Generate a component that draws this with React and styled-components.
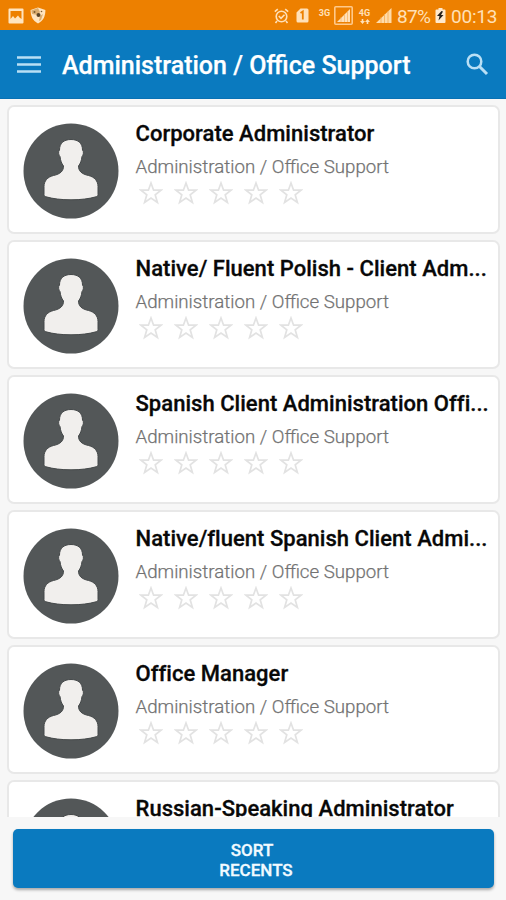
import React from "react";
import styled, { createGlobalStyle } from "styled-components";

const GlobalStyle = createGlobalStyle`
  * { box-sizing: border-box; }
  body { margin: 0; background: #f7f7f7; font-family: Roboto, "Liberation Sans", sans-serif; }
`;

const Screen = styled.div`
  width: 506px;
  height: 900px;
  display: flex;
  flex-direction: column;
  overflow: hidden;
  background: #f7f7f7;
`;

const StatusBar = styled.div`
  flex: none;
  height: 30px;
  padding: 1px 9px 0 8px;
  display: flex;
  align-items: center;
  background: #ed8000;
  color: #ffe0b8;
  svg { display: block; flex: none; }
`;

const StatusGroup = styled.div`
  display: flex;
  align-items: center;
  margin-left: ${(p) => (p.$end ? "auto" : "0")};
`;

const Slot = styled.span`
  display: flex;
  margin-left: ${(p) => p.$gap || 0}px;
`;

const StatusText = styled.span`
  width: ${(p) => p.$width}px;
  margin-left: ${(p) => p.$gap}px;
  font-size: 19px;
  line-height: 28px;
  letter-spacing: ${(p) => p.$spacing || 0}px;
  padding-top: 2px;
  white-space: nowrap;
`;

const NetworkLabel = styled.span`
  width: 13px;
  margin-left: ${(p) => p.$gap}px;
  display: flex;
  flex-direction: column;
  align-items: center;
  align-self: flex-start;
  padding-top: 8px;
  font-size: 9px;
  font-weight: 700;
  line-height: 9px;
`;

const AppBar = styled.header`
  flex: none;
  height: 69px;
  padding: 2px 17px 0 17px;
  display: flex;
  align-items: center;
  background: #0a7abf;
  border-bottom: 1px solid #0871b4;
  color: #b9dff5;
`;

const IconButton = styled.button`
  border: 0;
  padding: 0;
  background: none;
  color: inherit;
  display: flex;
`;

const Title = styled.h1`
  flex: 1;
  margin: 2px 0 0 21px;
  color: #fff;
  font-size: 25px;
  font-weight: 500;
  -webkit-text-stroke: 0.25px #fff;
  line-height: 32px;
  white-space: nowrap;
`;

const List = styled.main`
  flex: none;
  height: 718px;
  padding: 6px 6px 0 7px;
  display: flex;
  flex-direction: column;
  gap: 6px;
  overflow: hidden;
`;

const Card = styled.article`
  flex: none;
  height: 129px;
  padding: 0 9px 0 14px;
  display: flex;
  background: #fff;
  border: 2px solid #e8e8e8;
  border-radius: 7px;
`;

const Avatar = styled.svg`
  flex: none;
  display: block;
  width: 96px;
  height: 96px;
  margin-top: 15.5px;
`;

const Details = styled.div`
  flex: 1;
  min-width: 0;
  margin-left: 16.5px;
  padding-top: 13px;
`;

const JobTitle = styled.h2`
  margin: 0;
  color: #080808;
  font-size: 22px;
  font-weight: 500;
  -webkit-text-stroke: 0.3px #080808;
  letter-spacing: 0.03px;
  line-height: 28px;
  white-space: nowrap;
`;

const Category = styled.p`
  margin: 7px 0 0;
  color: #727272;
  font-size: 18.7px;
  font-weight: 300;
  -webkit-text-stroke: 0.25px #727272;
  line-height: 24px;
  white-space: nowrap;
`;

const Rating = styled.div`
  display: flex;
  gap: 11.2px;
  margin: 2px 0 0 3px;
`;

const Footer = styled.footer`
  padding: 12px 12px 0 13px;
`;

const SortButton = styled.button`
  width: 100%;
  height: 59px;
  border: 0;
  border-radius: 5px;
  padding: 3px 0 0 5px;
  display: flex;
  flex-direction: column;
  align-items: center;
  justify-content: center;
  background: #0a7abf;
  box-shadow: 0 2px 3px rgba(0, 0, 0, 0.32);
  color: #f2faff;
  font: 500 17px/20px Roboto, "Liberation Sans", sans-serif;
  -webkit-text-stroke: 0.3px #f2faff;
`;

const ButtonLine = styled.span`
  display: block;
  padding-right: ${(p) => p.$trail || 0}px;
`;

const PictureIcon = () => (
  <svg width="16" height="16" viewBox="0 0 16 16">
    <path fill="#ffe4bf" fillRule="evenodd" d="M1.5.5h13a1 1 0 0 1 1 1v13a1 1 0 0 1-1 1h-13a1 1 0 0 1-1-1v-13a1 1 0 0 1 1-1ZM2.500 3v8l2.500-3 2 2.500L10 7.500l1.500 2 2 1.500V3Z" />
  </svg>
);

const ShieldIcon = () => (
  <svg width="16" height="17" viewBox="0 0 16 17">
    <path fill="#ffe4bf" d="M8 .5 15.4 3c0 6-1.8 10.500-7.400 13.500C2.500 13.500.6 9 .6 3Z" />
    <path fill="#dcae70" d="m8 1 2 4-2 3-6-1-.7-3.500ZM10 9l3-2-2 6-2 1Z" />
    <circle cx="8.500" cy="8" r="2" fill="#594326" />
    <circle cx="4.500" cy="5" r="1" fill="#7b5b30" />
    <circle cx="11.500" cy="4.500" r=".8" fill="#7b5b30" />
  </svg>
);

const AlarmIcon = () => (
  <svg width="15" height="16" viewBox="0 0 15 16" fill="none" stroke="currentColor" strokeWidth="1.6">
    <circle cx="7.500" cy="8.500" r="5.300" />
    <path d="m.8 3.700 3-2.500m10.400 2.500-3-2.500M3 13l-1.500 2M12 13l1.500 2M4.800 8l2.200 2.300 3.500-3.600" />
  </svg>
);

const SimIcon = () => (
  <svg width="13" height="15" viewBox="0 0 13 15">
    <path fill="currentColor" d="M4.500.5H11A1.500 1.500 0 0 1 12.500 2v11a1.500 1.500 0 0 1-1.500 1.500H2A1.500 1.500 0 0 1 .5 13V4.500Z" />
    <path d="m4.500 5 2.300-1.500V11.500" fill="none" stroke="#ed8000" strokeWidth="1.800" />
  </svg>
);

const SignalIcon = ({ boxed }) => boxed ? (
  <svg width="19" height="19" viewBox="0 0 19 19">
    <rect x=".8" y=".8" width="17.400" height="17.400" rx="1" fill="none" stroke="#ffc98a" strokeWidth="1.600" />
    <path fill="#ffe0b8" d="M16 3v13H3Z" />
    <path d="M7 11v5M10.500 8v8M13.500 5v11" stroke="#f7b15f" strokeWidth=".7" />
  </svg>
) : (
  <svg width="16" height="15" viewBox="0 0 16 15">
    <path fill="#ffdba9" d="M15.500 0v15H0Z" />
    <path d="M5 9v6M8.500 6v9M12 3v12" stroke="#f5aa52" strokeWidth=".8" />
  </svg>
);

const DataArrows = () => (
  <svg width="10" height="7" viewBox="0 0 10 7">
    <path fill="currentColor" d="M2.500 6 0 3h1.700V1h1.600v2H5ZM7.500 1 5 4h1.700v2h1.600V4H10Z" />
  </svg>
);

const BatteryIcon = () => (
  <svg width="11" height="15" viewBox="0 0 11 15">
    <path fill="#ffe9cc" d="M3.500 0h4v1.500h2a1 1 0 0 1 1 1V14a1 1 0 0 1-1 1h-8a1 1 0 0 1-1-1V2.500a1 1 0 0 1 1-1h2Z" />
    <path fill="#26211c" d="M6.500 3 2 8h2.500L3.500 12.500 8.500 7H6l2-3.500Z" />
  </svg>
);

const MenuIcon = () => (
  <svg width="24" height="18" viewBox="0 0 24 18" fill="none" stroke="currentColor" strokeWidth="2.300">
    <path d="M0 1.500h24M0 8.500h24M0 15.500h24" />
  </svg>
);

const SearchIcon = () => (
  <svg width="24" height="24" viewBox="0 0 24 24" fill="none" stroke="currentColor" strokeWidth="2.500">
    <circle cx="9.500" cy="8.500" r="6.800" />
    <path d="m14.500 13.500 7.500 7.500" strokeWidth="3" />
  </svg>
);

const StarIcon = () => (
  <svg width="24" height="24" viewBox="0 0 24 24">
    <path fill="none" stroke="#e2e2e2" strokeWidth="1.700" d="m12 2 2.600 7.200h7.400l-5.800 4.600 2.200 7.700-6.400-4.400-6.400 4.400 2.200-7.700-5.800-4.600h7.400Z" />
  </svg>
);

const Person = () => (
  <Avatar viewBox="0 0 96 96">
    <circle cx="48" cy="48" r="47.500" fill="#535758" />
    <path fill="#f1efed" stroke="#45494a" strokeWidth="1" d="M48 16.500c-7.500 0-11.500 4-11.500 10.500-1.500 1-1 5.500.5 6.500.5 4 1.500 7 3.500 9.500 0 5-3 8-10 9.500-6 1.500-9.500 5.500-9.500 11v8c0 1.500 1 2 2 2.300 7 2 15 3 25 3s18-1 25-3c1-.3 2-.8 2-2.300v-8c0-5.500-3.500-9.500-9.500-11-7-1.500-10-4.500-10-9.500 2-2.500 3-5.500 3.500-9.500 1.500-1 2-5.500.5-6.500 0-6.500-4-10.500-11.500-10.500Z" />
  </Avatar>
);

const jobs = [
  "Corporate Administrator",
  "Native/ Fluent Polish - Client Adm...",
  "Spanish Client Administration Offi...",
  "Native/fluent Spanish Client Admi...",
  "Office Manager",
  "Russian-Speaking Administrator",
];

export default function App() {
  return (
    <Screen>
      <GlobalStyle />
      <StatusBar>
        <StatusGroup>
          <PictureIcon />
          <Slot $gap={6}><ShieldIcon /></Slot>
        </StatusGroup>
        <StatusGroup $end>
          <AlarmIcon />
          <Slot $gap={7}><SimIcon /></Slot>
          <NetworkLabel $gap={9}>3G</NetworkLabel>
          <Slot $gap={3}><SignalIcon boxed /></Slot>
          <NetworkLabel $gap={5}>4G<DataArrows /></NetworkLabel>
          <Slot $gap={5}><SignalIcon /></Slot>
          <StatusText $gap={5} $width={33} $spacing={-0.7}>87%</StatusText>
          <Slot $gap={5}><BatteryIcon /></Slot>
          <StatusText $gap={5} $width={46} $spacing={-0.2}>00:13</StatusText>
        </StatusGroup>
      </StatusBar>
      <AppBar>
        <IconButton aria-label="Menu"><MenuIcon /></IconButton>
        <Title>Administration / Office Support</Title>
        <IconButton aria-label="Search"><SearchIcon /></IconButton>
      </AppBar>
      <List>
        {jobs.map((job) => (
          <Card key={job}>
            <Person />
            <Details>
              <JobTitle>{job}</JobTitle>
              <Category>Administration / Office Support</Category>
              <Rating>
                {[1, 2, 3, 4, 5].map((n) => <StarIcon key={n} />)}
              </Rating>
            </Details>
          </Card>
        ))}
      </List>
      <Footer>
        <SortButton>
          <ButtonLine $trail={8}>SORT</ButtonLine>
          <ButtonLine>RECENTS</ButtonLine>
        </SortButton>
      </Footer>
    </Screen>
  );
}
